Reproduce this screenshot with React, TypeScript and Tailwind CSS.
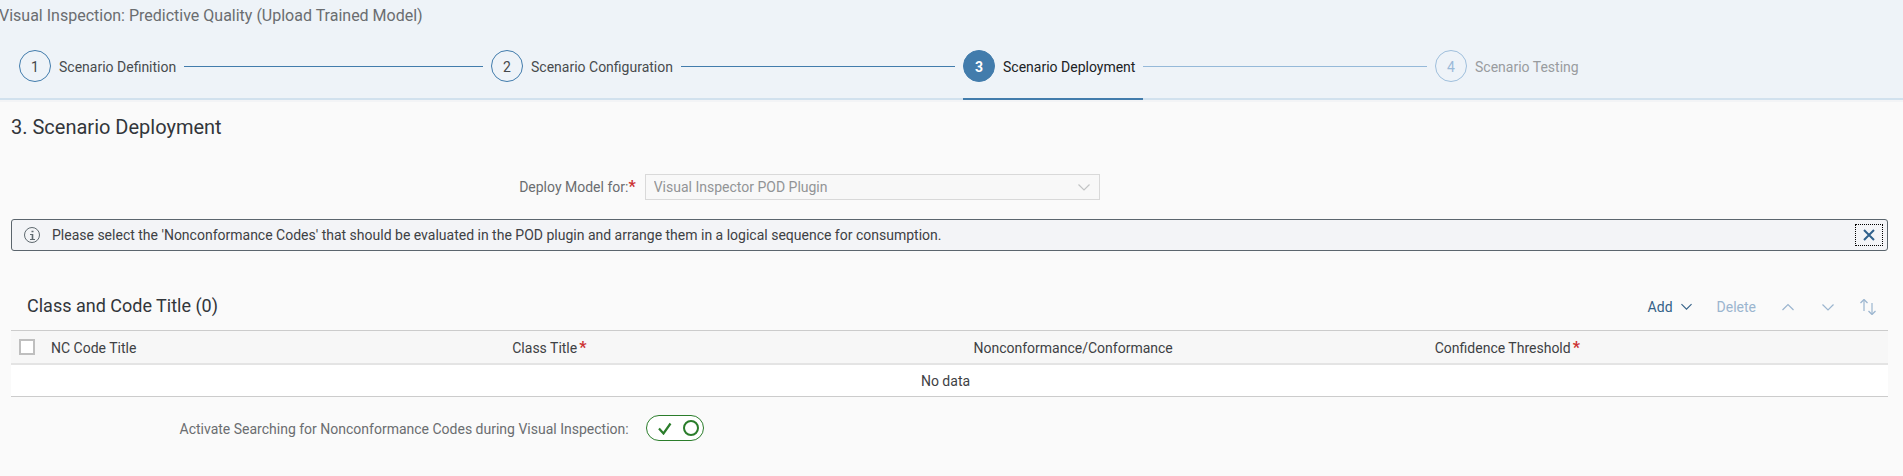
import { useState } from "react";

type StepState = "done" | "active" | "upcoming";

const steps: { number: number; label: string; state: StepState }[] = [
  { number: 1, label: "Scenario Definition", state: "done" },
  { number: 2, label: "Scenario Configuration", state: "done" },
  { number: 3, label: "Scenario Deployment", state: "active" },
  { number: 4, label: "Scenario Testing", state: "upcoming" },
];

const columns = [
  { title: "NC Code Title", required: false },
  { title: "Class Title", required: true },
  { title: "Nonconformance/Conformance", required: false },
  { title: "Confidence Threshold", required: true },
];

const circleStyles: Record<StepState, string> = {
  done: "border-[#427cac] text-[#45484b]",
  active: "border-[#427cac] bg-[#427cac] font-bold text-white",
  upcoming: "border-[#9fbfdc] text-[#9bbad8]",
};

const labelStyles: Record<StepState, string> = {
  done: "text-[#484b4e]",
  active: "text-[#202224]",
  upcoming: "text-[#999c9f]",
};

function Chevron({ up = false, size = 12 }: { up?: boolean; size?: number }) {
  return (
    <svg width={size} height={size} viewBox="0 0 12 12" fill="none" stroke="currentColor" strokeWidth="1.200" aria-hidden="true">
      <path d={up ? "M0.5 9 6 3.500l5.500 5.500" : "M0.500 3.500 6 9l5.500-5.500"} />
    </svg>
  );
}

function Required() {
  return <span className="text-base leading-4 font-bold text-[#cc3333]">*</span>;
}

function WizardHeader() {
  return (
    <header className="border-b-2 border-[#d1e1ee] bg-[#eef3f8]">
      <h1 className="-ml-px pt-1 text-base leading-6 text-[#6a6d70]">
        Visual Inspection: Predictive Quality (Upload Trained Model)
      </h1>
      <ol className="-mb-0.5 grid grid-cols-4 pt-[22px] pl-[15px]">
        {steps.map((step, index) => (
          <li key={step.number} className="flex px-1">
            <button
              type="button"
              disabled={step.state === "upcoming"}
              aria-current={step.state === "active" ? "step" : undefined}
              className={`flex items-center gap-2 border-b-2 pr-2 pb-4 whitespace-nowrap ${
                step.state === "active" ? "border-[#427cac]" : "border-transparent"
              }`}
            >
              <span className={`flex size-8 items-center justify-center rounded-full border pt-px ${circleStyles[step.state]}`}>
                {step.number}
              </span>
              <span className={`pt-0.5 ${labelStyles[step.state]}`}>{step.label}</span>
            </button>
            {index < steps.length - 1 && (
              <span className={`mt-4 h-px flex-1 ${step.state === "done" ? "bg-[#427cac]" : "bg-[#95b9d9]"}`} />
            )}
          </li>
        ))}
      </ol>
    </header>
  );
}

function MessageStrip({ onClose }: { onClose: () => void }) {
  return (
    <div role="status" className="mt-[19px] flex h-8 items-center rounded-[3px] border border-[#5b656d] bg-[#f3f4f7] pr-1 pl-3">
      <svg width="16" height="16" viewBox="0 0 16 16" fill="none" stroke="#5f696f" aria-hidden="true">
        <circle cx="8" cy="8" r="7.500" />
        <path d="M6 7.500h2.500M6 12.500h5" />
        <path d="M8.500 7v5.500M7.500 4.500h2" strokeWidth="1.600" />
      </svg>
      <p className="flex-1 pl-3 text-[#3e4144]">
        Please select the 'Nonconformance Codes' that should be evaluated in the POD plugin and arrange them in a logical
        sequence for consumption.
      </p>
      <button
        type="button"
        aria-label="Close"
        onClick={onClose}
        className="flex h-[22px] w-7 items-center justify-center border border-dotted border-black text-[#2f608c]"
      >
        <svg width="12" height="12" viewBox="0 0 12 12" fill="none" stroke="currentColor" strokeWidth="2" aria-hidden="true">
          <path d="m1 1 10 10M11 1 1 11" />
        </svg>
      </button>
    </div>
  );
}

function Toolbar() {
  return (
    <div className="mt-8 flex h-[47px] items-center justify-between pr-3 pl-4">
      <h3 className="pb-0.5 text-lg text-[#32363a]">Class and Code Title (0)</h3>
      <div className="flex items-center text-[#9bb5cf]">
        <button type="button" className="flex items-center gap-2 text-[#346187]">
          Add
          <Chevron size={11} />
        </button>
        <button type="button" disabled className="ml-[25px]">
          Delete
        </button>
        <button type="button" disabled aria-label="Move up" className="ml-[26px]">
          <Chevron up />
        </button>
        <button type="button" disabled aria-label="Move down" className="ml-7">
          <Chevron />
        </button>
        <button type="button" disabled aria-label="Sort" className="ml-[26px]">
          <svg width="16" height="16" viewBox="0 0 16 16" fill="none" stroke="currentColor" aria-hidden="true">
            <path d="M4 12V1M12 4v11" strokeWidth="2" strokeOpacity="0.600" />
            <path d="M0.500 4 4 0.500 7.500 4M8.500 12l3.500 3.500 3.500-3.500" strokeWidth="1.300" />
          </svg>
        </button>
      </div>
    </div>
  );
}

function CodeTable() {
  return (
    <table className="w-full table-fixed border-separate border-spacing-0 text-[#3e4144]">
      <thead>
        <tr className="h-[35px] bg-[#f7f7f7]">
          <th className="w-8 border-t border-b-2 border-t-[#cccccc] border-b-[#e4e4e4] p-0 text-left">
            <input
              type="checkbox"
              aria-label="Select all rows"
              className="ml-2 block size-4 appearance-none border-2 border-[#bfbfbf] bg-white checked:bg-[#427cac]"
            />
          </th>
          {columns.map((column) => (
            <th
              key={column.title}
              className="border-t border-b-2 border-t-[#cccccc] border-b-[#e4e4e4] px-2 pt-px pb-0 text-left font-normal"
            >
              {column.title}
              {column.required && (
                <span className="pl-0.5">
                  <Required />
                </span>
              )}
            </th>
          ))}
        </tr>
      </thead>
      <tbody>
        <tr className="h-8 bg-white">
          <td colSpan={5} className="border-b border-[#cccccc] py-0 pr-2 text-center">
            No data
          </td>
        </tr>
      </tbody>
    </table>
  );
}

function SearchSwitch() {
  const [on, setOn] = useState(true);
  return (
    <div className="mt-[18px] flex items-center">
      <label htmlFor="search-codes" className="w-1/3 pt-0.5 pr-2 text-right text-[#6a6d70]">
        Activate Searching for Nonconformance Codes during Visual Inspection:
      </label>
      <button
        id="search-codes"
        type="button"
        role="switch"
        aria-checked={on}
        onClick={() => setOn(!on)}
        className={`ml-[9px] flex h-[26px] w-[58px] items-center justify-between rounded-full border bg-white pr-1 pl-[11px] ${
          on ? "border-[#2b7d2b] text-[#2b7d2b]" : "flex-row-reverse border-[#89919a] text-[#6a6d70]"
        }`}
      >
        <svg width="14" height="14" viewBox="0 0 14 14" fill="none" stroke="currentColor" strokeWidth="2.200" aria-hidden="true">
          {on ? <path d="m1 7.500 4.500 5L12.500 2.500" /> : <path d="m2 2 10 10M12 2 2 12" />}
        </svg>
        <span className="size-4 rounded-full border-2 border-current" />
      </button>
    </div>
  );
}

export default function App() {
  const [showMessage, setShowMessage] = useState(true);
  return (
    <div className="min-h-screen overflow-x-hidden bg-[#fafafa] font-['Roboto',sans-serif] text-sm">
      <WizardHeader />
      <div className="h-0.5 bg-[#f3f4f6]" />
      <main className="pr-[15px] pb-9 pl-[11px]">
        <h2 className="pt-[11px] text-xl leading-7 text-[#32363a]">3. Scenario Deployment</h2>
        <div className="mt-[33px] flex h-[26px] items-center">
          <label htmlFor="deploy-model" className="w-1/3 pr-px text-right text-[#6a6d70]">
            Deploy Model for:
            <Required />
          </label>
          <div className="grid w-1/4 items-center pr-1.5 pl-2">
            <select
              id="deploy-model"
              disabled
              className="col-start-1 row-start-1 h-[26px] w-full appearance-none border border-[#d9d9d9] bg-[#f8f8f8] px-2 text-[#929496] opacity-100"
            >
              <option>Visual Inspector POD Plugin</option>
            </select>
            <span className="pointer-events-none col-start-1 row-start-1 mr-2.5 justify-self-end text-[#c2c4c5]">
              <Chevron />
            </span>
          </div>
        </div>
        {showMessage && <MessageStrip onClose={() => setShowMessage(false)} />}
        <Toolbar />
        <CodeTable />
        <SearchSwitch />
      </main>
    </div>
  );
}
